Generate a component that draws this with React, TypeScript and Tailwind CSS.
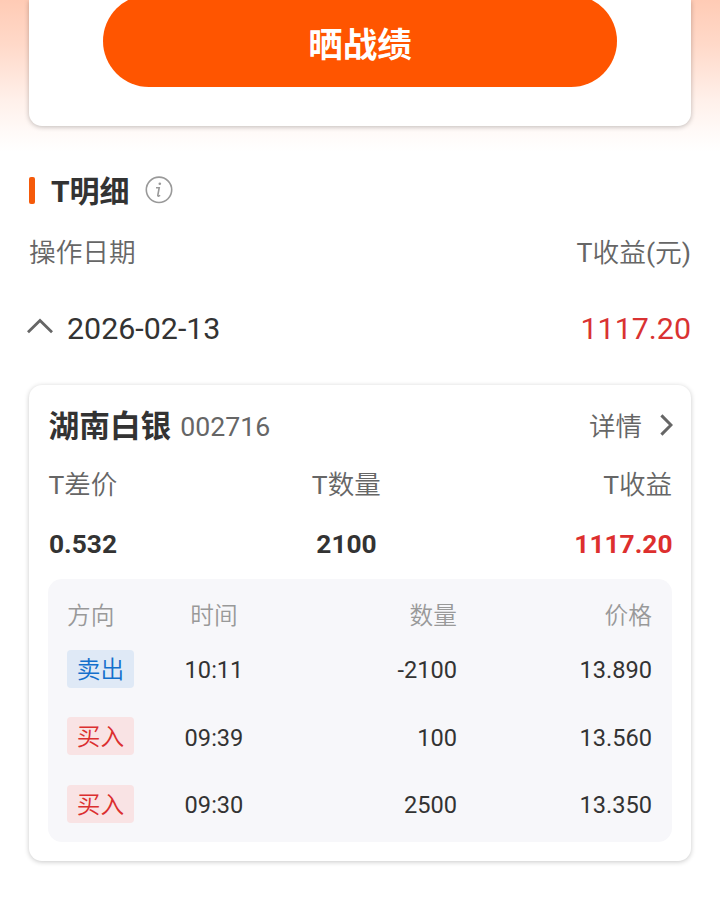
interface TradeRow {
  side: 'buy' | 'sell';
  time: string;
  quantity: string;
  price: string;
}

const TRADES: TradeRow[] = [
  { side: 'sell', time: '10:11', quantity: '-2100', price: '13.890' },
  { side: 'buy', time: '09:39', quantity: '100', price: '13.560' },
  { side: 'buy', time: '09:30', quantity: '2500', price: '13.350' },
];

function InfoIcon() {
  return (
    <svg width="28" height="28" viewBox="0 0 28 28" fill="none" stroke="#999" className="shrink-0">
      <circle cx="14" cy="13.8" r="12.7" strokeWidth="1.6" />
      <circle cx="14.8" cy="7.8" r="1.3" fill="#999" stroke="none" />
      <path d="M11 11.7h3.2l-1.4 7.6q-.1 1 .9.8l1.5-.7" strokeWidth="1.6" />
    </svg>
  );
}

function ChevronUp() {
  return (
    <svg width="26" height="16" viewBox="0 0 26 16" fill="none" stroke="#666" strokeWidth="2.8" className="mb-[7px] shrink-0">
      <path d="M1 14.2 13 2.4 25 14.2" />
    </svg>
  );
}

function ChevronRight() {
  return (
    <svg width="13" height="22" viewBox="0 0 13 22" fill="none" stroke="#666" strokeWidth="3" className="mb-[4px] shrink-0">
      <path d="M1.4 1.4 11 11 1.4 20.6" />
    </svg>
  );
}

// 标签前缀的拉丁字母用常规字重，汉字用较细字重
function TLabel({ text, className = '' }: { text: string; className?: string }) {
  return (
    <span className={className}>
      <span className="font-normal">T</span>
      {text}
    </span>
  );
}

function SideTag({ side }: { side: TradeRow['side'] }) {
  const color = side === 'sell' ? 'bg-[#dfe9f6] text-[#1470cc]' : 'bg-[#f9e3e4] text-[#db2f2f]';
  return (
    <span className={`mb-[2px] flex h-[38px] w-[67px] items-center justify-center rounded-[4px] pt-[4px] text-[23.7px] font-[350] ${color}`}>
      {side === 'sell' ? '卖出' : '买入'}
    </span>
  );
}

function TradeTable() {
  return (
    <div className="mt-[12px] h-[263px] rounded-[14px] bg-[#f7f7fa] pr-5 pl-[19px] pt-[18px]">
      <div className="grid h-[39px] grid-cols-[67px_160px_163px_195px] items-center text-[23.7px] font-[350] text-[#999]">
        <span>方向</span>
        <span className="text-center">时间</span>
        <span className="text-right">数量</span>
        <span className="text-right">价格</span>
      </div>
      {TRADES.map((t) => (
        <div
          key={t.time}
          className="grid h-[67.5px] grid-cols-[67px_160px_163px_195px] items-center text-[23.6px] text-[#333]"
        >
          <SideTag side={t.side} />
          <span className="pt-[3px] text-center">{t.time}</span>
          <span className="pt-[3px] text-right">{t.quantity}</span>
          <span className="pt-[3px] text-right">{t.price}</span>
        </div>
      ))}
    </div>
  );
}

function StockCard() {
  return (
    <section className="mx-[29px] h-[476px] rounded-[13px] bg-white px-[19px] pt-5 shadow-[0_1px_5px_rgba(0,0,0,0.22)]">
      <div className="flex h-11 items-center justify-between">
        <div className="flex items-center gap-[9px] pl-[0.5px]">
          <h2 className="pt-px text-[30.7px] font-bold text-[#333]">湖南白银</h2>
          <span className="text-[26.7px] text-[#666]">002716</span>
        </div>
        <div className="-mr-px flex items-center gap-[18px] text-[26.5px] font-[350] text-[#666]">
          <span className="pt-px">详情</span>
          <ChevronRight />
        </div>
      </div>
      <div className="mt-[13px] grid h-[46px] grid-cols-3 items-center pl-[0.5px] text-[26.5px] font-[350] text-[#666]">
        <TLabel text="差价" />
        <TLabel text="数量" className="-ml-7 text-center" />
        <TLabel text="收益" className="text-right" />
      </div>
      <div className="mt-[13px] grid h-[46px] grid-cols-3 items-center pl-px text-[26.3px] font-bold text-[#333]">
        <span>0.532</span>
        <span className="-ml-7 text-center">2100</span>
        <span className="-mr-[0.5px] text-right text-[#dd2f2e]">1117.20</span>
      </div>
      <TradeTable />
    </section>
  );
}

export default function App() {
  return (
    <main className="h-[915px] w-[720px] overflow-hidden bg-white bg-[linear-gradient(to_bottom,#ffcbb5_0px,#ffd9c9_45px,#fff0ea_100px,#fffaf8_132px,#ffffff_152px)] font-['Roboto','Noto_Sans_CJK_SC',sans-serif] leading-none">
      <div className="mx-[29px] flex h-[126px] flex-col items-center justify-end rounded-b-[13px] bg-white pb-[39px] shadow-[0_1px_5px_rgba(0,0,0,0.25)]">
        <button className="h-[92px] w-[514px] shrink-0 rounded-full bg-[#ff5500] pt-[8px] text-[34.5px] font-bold text-white">
          晒战绩
        </button>
      </div>

      <div className="mt-[42px] flex h-11 items-center px-[29px]">
        <i className="h-[27px] w-[6px] rounded-[2px] bg-[#f55a0a]" />
        <h1 className="mr-[15px] ml-4 pt-[3px] text-[30px] font-bold text-[#333]">T明细</h1>
        <InfoIcon />
      </div>

      <div className="mt-[17px] flex h-12 items-center justify-between px-[29px] pt-px text-[26.7px] font-[350] text-[#666]">
        <span>操作日期</span>
        <span>
          <span className="font-normal">T</span>收益<span className="font-normal">(</span>元
          <span className="font-normal">)</span>
        </span>
      </div>

      <div className="mt-[28px] flex h-12 items-center justify-between pr-[29px] pl-[27px] text-[30.4px]">
        <div className="flex items-center gap-[14px] text-[#333]">
          <ChevronUp />
          <span>2026-02-13</span>
        </div>
        <span className="text-[#d93232]">1117.20</span>
      </div>

      <div className="pt-[32px]">
        <StockCard />
      </div>
    </main>
  );
}
